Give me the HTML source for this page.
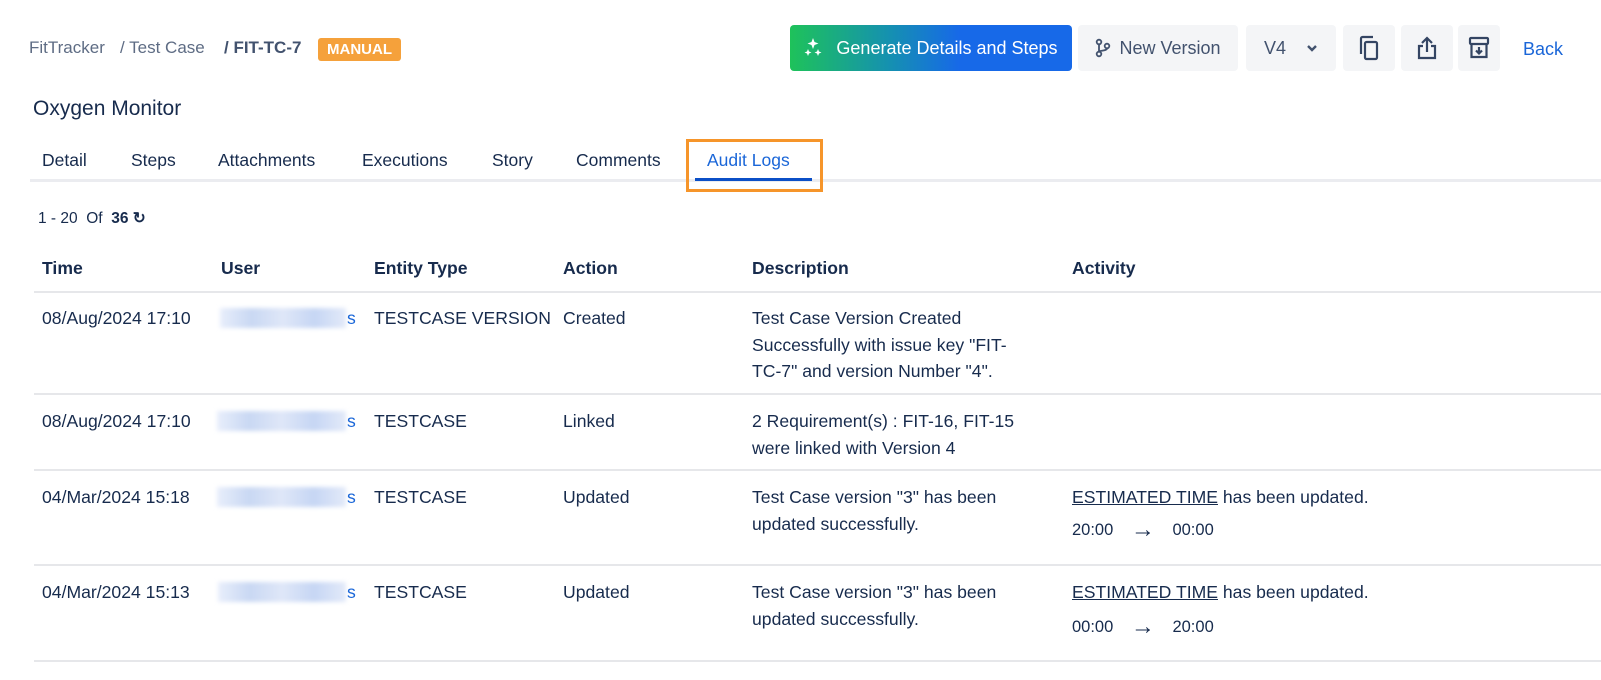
<!DOCTYPE html>
<html><head><meta charset="utf-8"><style>
body{margin:0;width:1601px;height:680px;background:#fff;font-family:"Liberation Sans",sans-serif;color:#172b4d;position:relative;overflow:hidden}
.a{position:absolute;white-space:nowrap}
.bc{font-size:17px;color:#5e6c84;top:38px}
.btn{position:absolute;top:25px;height:46px;border-radius:4px;background:#f4f5f7;display:flex;align-items:center;justify-content:center;font-size:18px;color:#42526e}
.tab{position:absolute;top:150px;font-size:17.5px;color:#172b4d}
.row{font-size:17.6px;color:#172b4d;line-height:26.5px}
.th{font-size:17.6px;font-weight:bold;top:258px}
.line{position:absolute;left:34px;right:0;height:2px;background:#e6e7ea}
.blur{position:absolute;height:20px;background:linear-gradient(90deg,#e8eefb,#c9d8f3,#dfe7f8,#c6d6f4,#e3eaf9);filter:blur(2px)}
.u{color:#1a66d8}
.est{text-decoration:underline;color:#172b4d}
.arr{display:inline-block;width:50px;text-align:center;font-size:24px;font-weight:bold;vertical-align:-2px}
</style></head><body>
<div class="a bc" style="left:29px">FitTracker</div>
<div class="a bc" style="left:120px">/ Test Case</div>
<div class="a bc" style="left:224px;color:#42526e;font-weight:bold">/ FIT-TC-7</div>
<div class="a" style="left:318px;top:38px;width:83px;height:23px;background:#f5a13b;border-radius:3px;color:#fff;font-weight:bold;font-size:15px;line-height:23px;text-align:center">MANUAL</div>

<div class="btn" style="left:790px;width:282px;background:linear-gradient(90deg,#1ec25a 0%,#1591b0 35%,#1769e8 60%,#1769e8 100%);color:#fff">
<svg width="20" height="22" viewBox="0 0 20 22" style="margin-right:12px"><path d="M9 1l1.5 4 4 1.5-4 1.5L9 12 7.5 8 3.5 6.5l4-1.5z M4 12l1 2.5 2.5 1L5 16.5 4 19l-1-2.5-2.5-1L3 14.5z M14 12l1 2.5 2.5 1-2.5 1L14 19l-1-2.5-2.5-1 2.5-1z" fill="#fff"/></svg>Generate Details and Steps</div>
<div class="btn" style="left:1078px;width:160px"><svg width="16" height="20" viewBox="0 0 16 20" style="margin-right:8px"><circle cx="4" cy="4" r="2.3" fill="none" stroke="#42526e" stroke-width="1.8"/><circle cx="4" cy="16" r="2.3" fill="none" stroke="#42526e" stroke-width="1.8"/><circle cx="12" cy="8" r="2.3" fill="none" stroke="#42526e" stroke-width="1.8"/><path d="M4 6.3v7.4M12 10.3c0 3-8 2-8 3.4" fill="none" stroke="#42526e" stroke-width="1.8"/></svg>New Version</div>
<div class="btn" style="left:1246px;width:90px">V4<svg width="12" height="8" viewBox="0 0 12 8" style="margin-left:20px"><path d="M2 2l4 4 4-4" fill="none" stroke="#42526e" stroke-width="2.4"/></svg></div>
<div class="btn" style="left:1343px;width:52px"><svg width="20" height="26" viewBox="0 0 20 26"><rect x="6" y="7" width="12" height="17" rx="1.5" fill="none" stroke="#344563" stroke-width="2.2"/><path d="M2 19V3.5C2 2.7 2.7 2 3.5 2H14" fill="none" stroke="#344563" stroke-width="2.2"/></svg></div>
<div class="btn" style="left:1401px;width:52px"><svg width="22" height="26" viewBox="0 0 22 26"><path d="M11 17V3M6 8l5-5 5 5M7 11H3v12h16V11h-4" fill="none" stroke="#344563" stroke-width="2.2"/></svg></div>
<div class="btn" style="left:1458px;width:42px"><svg width="22" height="24" viewBox="0 0 22 24"><rect x="2" y="2" width="18" height="6" rx="1" fill="none" stroke="#344563" stroke-width="2.2"/><path d="M3.5 8v13h15V8M11 11v6M8 14.5l3 3 3-3" fill="none" stroke="#344563" stroke-width="2.2"/></svg></div>
<div class="a" style="left:1523px;top:39px;font-size:18px;color:#1a66d8">Back</div>

<div class="a" style="left:33px;top:97px;font-size:21px;color:#172b4d">Oxygen Monitor</div>

<div class="tab" style="left:42px">Detail</div>
<div class="tab" style="left:131px">Steps</div>
<div class="tab" style="left:218px">Attachments</div>
<div class="tab" style="left:362px">Executions</div>
<div class="tab" style="left:492px">Story</div>
<div class="tab" style="left:576px">Comments</div>
<div class="tab" style="left:707px;color:#1a66d8">Audit Logs</div>
<div class="a" style="left:30px;right:0;top:179px;height:3px;background:#ebecf0"></div>
<div class="a" style="left:695px;width:117px;top:178px;height:3px;background:#0b4fc7"></div>
<div class="a" style="left:686px;top:139px;width:131px;height:47px;border:3px solid #f6952a"></div>

<div class="a" style="left:38px;top:209px;font-size:15.5px;color:#172b4d">1 - 20 &nbsp;Of &nbsp;<b>36</b> <span style="font-weight:bold">&#8635;</span></div>

<div class="a th" style="left:42px">Time</div>
<div class="a th" style="left:221px">User</div>
<div class="a th" style="left:374px">Entity Type</div>
<div class="a th" style="left:563px">Action</div>
<div class="a th" style="left:752px">Description</div>
<div class="a th" style="left:1072px">Activity</div>
<div class="line" style="top:291px"></div>

<div class="a row" style="left:42px;top:305px">08/Aug/2024 17:10</div>
<div class="blur" style="left:220px;top:308px;width:126px"></div><div class="a row u" style="left:347px;top:305px">s</div>
<div class="a row" style="left:374px;top:305px">TESTCASE VERSION</div>
<div class="a row" style="left:563px;top:305px">Created</div>
<div class="a row" style="left:752px;top:305px">Test Case Version Created<br>Successfully with issue key "FIT-<br>TC-7" and version Number "4".</div>
<div class="line" style="top:393px"></div>

<div class="a row" style="left:42px;top:408px">08/Aug/2024 17:10</div>
<div class="blur" style="left:217px;top:411px;width:129px"></div><div class="a row u" style="left:347px;top:408px">s</div>
<div class="a row" style="left:374px;top:408px">TESTCASE</div>
<div class="a row" style="left:563px;top:408px">Linked</div>
<div class="a row" style="left:752px;top:408px">2 Requirement(s) : FIT-16, FIT-15<br>were linked with Version 4</div>
<div class="line" style="top:469px"></div>

<div class="a row" style="left:42px;top:484px">04/Mar/2024 15:18</div>
<div class="blur" style="left:217px;top:487px;width:129px"></div><div class="a row u" style="left:347px;top:484px">s</div>
<div class="a row" style="left:374px;top:484px">TESTCASE</div>
<div class="a row" style="left:563px;top:484px">Updated</div>
<div class="a row" style="left:752px;top:484px">Test Case version "3" has been<br>updated successfully.</div>
<div class="a row" style="left:1072px;top:484px"><span class="est">ESTIMATED TIME</span> has been updated.</div>
<div class="a row" style="left:1072px;top:517px;font-size:16.5px">20:00 <span class="arr">&#8594;</span> 00:00</div>
<div class="line" style="top:564px"></div>

<div class="a row" style="left:42px;top:579px">04/Mar/2024 15:13</div>
<div class="blur" style="left:218px;top:582px;width:128px"></div><div class="a row u" style="left:347px;top:579px">s</div>
<div class="a row" style="left:374px;top:579px">TESTCASE</div>
<div class="a row" style="left:563px;top:579px">Updated</div>
<div class="a row" style="left:752px;top:579px">Test Case version "3" has been<br>updated successfully.</div>
<div class="a row" style="left:1072px;top:579px"><span class="est">ESTIMATED TIME</span> has been updated.</div>
<div class="a row" style="left:1072px;top:614px;font-size:16.5px">00:00 <span class="arr">&#8594;</span> 20:00</div>
<div class="line" style="top:660px"></div>
</body></html>
